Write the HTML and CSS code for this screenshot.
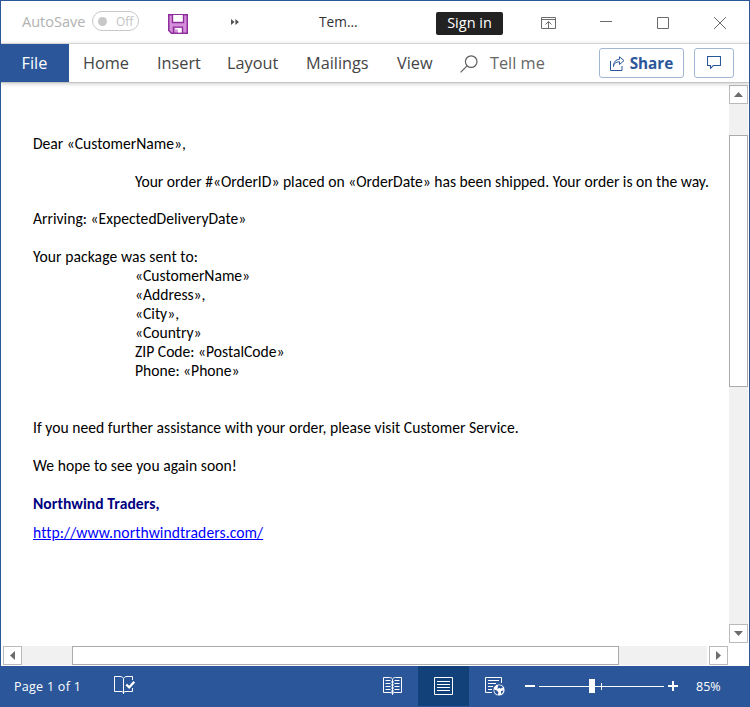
FILE: index.html
```
<!DOCTYPE html>
<html lang="en">
<head>
<meta charset="utf-8">
<title>Template - Word</title>
<link rel="stylesheet" href="styles.css">
</head>
<body>
<div class="window">
  <header class="titlebar">
    <span class="autosave">AutoSave</span>
    <span class="toggle"><i class="knob"></i><span>Off</span></span>
    <svg class="save" width="20" height="20" viewBox="0 0 20 20">
      <path d="M.75.75h18.5v18.5H3.5L.75 16.5z" fill="#d58fdb" stroke="#8f2f9c" stroke-width="1.5"/>
      <path d="M4.5 1v7.500h11V1" fill="#fff" stroke="#8f2f9c" stroke-width="1.4"/>
      <path d="M5.500 19.300v-6.200h9v6.200z" fill="#d58fdb" stroke="#8f2f9c" stroke-width="1.4"/>
      <path d="M7.200 14h6.400v4.600H9.800v-3H7.200z" fill="#fff"/>
    </svg>
    <svg class="more" width="8" height="6" viewBox="0 0 8 6" fill="#555"><path d="M0 0l3.600 3L0 6zM4.400 0L8 3 4.400 6z"/></svg>
    <span class="doc-name">Tem...</span>
    <span class="sign-in">Sign in</span>
    <svg class="ribbon-toggle" width="15" height="12" viewBox="0 0 15 12" fill="none" stroke="#6b6b6b"><path d="M.5.5h14v11H.5zM.5 2.500h14M7.500 11V4.500M4.500 7.500l3-3 3 3"/></svg>
    <svg class="minimize" width="12" height="12" viewBox="0 0 12 12" stroke="#6b6b6b"><path d="M0 5.500h12"/></svg>
    <svg class="maximize" width="12" height="12" viewBox="0 0 12 12" fill="none" stroke="#6b6b6b"><path d="M.5.5h11v11H.5z"/></svg>
    <svg class="close" width="12" height="12" viewBox="0 0 12 12" stroke="#6b6b6b"><path d="M0 0l12 12M12 0L0 12"/></svg>
  </header>

  <nav class="ribbon">
    <span class="tab file">File</span>
    <span class="tab home">Home</span>
    <span class="tab insert">Insert</span>
    <span class="tab layout">Layout</span>
    <span class="tab mailings">Mailings</span>
    <span class="tab view">View</span>
    <svg class="search" width="18" height="18" viewBox="0 0 18 18" fill="none" stroke="#5f5f5f" stroke-width="1.200"><circle cx="11.200" cy="6.600" r="5.800"/><path d="M7 10.800L.6 17.400"/></svg>
    <span class="tell">Tell me</span>
    <span class="button share">
      <svg width="15" height="15" viewBox="0 0 15 15" fill="none" stroke="#2b579a"><path d="M.5 5v9.500h11.500V10M3.500 10.500c.3-3 2-4.500 6-4.700M9.500 3.300c-3.600.2-6 2.600-6 7.200M9.500.8v2.500M9.500 5.800v2.700L14 4.600 9.500.8"/></svg>
      Share
    </span>
    <span class="button comment">
      <svg width="14" height="13" viewBox="0 0 14 13" fill="none" stroke="#2b579a" stroke-width="1.100"><path d="M.5.5h13v9H6.300L3.500 12.300V9.500h-3z"/></svg>
    </span>
  </nav>

  <main class="workspace">
    <article class="page">
      <p>Dear «CustomerName»,</p>
      <p class="indent gap">Your order #«OrderID» placed on «OrderDate» has been shipped. Your order is on the way.</p>
      <p class="arriving">Arriving: «ExpectedDeliveryDate»</p>
      <p class="gap sent">Your package was sent to:</p>
      <p class="indent">«CustomerName»</p>
      <p class="indent">«Address»,</p>
      <p class="indent">«City»,</p>
      <p class="indent">«Country»</p>
      <p class="indent">ZIP Code: «PostalCode»</p>
      <p class="indent">Phone: «Phone»</p>
      <p class="assist">If you need further assistance with your order, please visit Customer Service.</p>
      <p class="gap hope">We hope to see you again soon!</p>
      <p class="gap company">Northwind Traders,</p>
      <p class="site"><a href="#">http://www.northwindtraders.com/</a></p>
    </article>
    <div class="vscroll">
      <span class="arrow"><svg width="9" height="5" viewBox="0 0 9 5"><path d="M4.500 0L9 5H0z"/></svg></span>
      <div class="vtrack"><div class="vthumb"></div></div>
      <span class="arrow"><svg width="9" height="5" viewBox="0 0 9 5"><path d="M0 0h9L4.500 5z"/></svg></span>
    </div>
    <div class="hscroll">
      <span class="arrow"><svg width="5" height="9" viewBox="0 0 5 9"><path d="M5 0v9L0 4.500z"/></svg></span>
      <div class="htrack"><div class="hthumb"></div></div>
      <span class="arrow"><svg width="5" height="9" viewBox="0 0 5 9"><path d="M0 0l5 4.500L0 9z"/></svg></span>
    </div>
  </main>

  <footer class="status">
    <span class="pages">Page 1 of 1</span>
    <svg class="proof" width="21" height="19" viewBox="0 0 21 19" fill="none" stroke="#fff"><path d="M9.500 2.500C8.500 1 7.500.5 6 .5H.5v15H7c1.500 0 2.500.5 2.500 2 0-1.500 1-2 2.500-2h6.500V12M9.500 2.500v15M9.500 2.500c1-1.500 2-2 3.500-2h5.500V4"/><path d="M12.300 8.500l2.900 2.900 5-5.600" stroke-width="2.300"/></svg>
    <span class="mode read"><svg width="19" height="18" viewBox="0 0 19 18" fill="none" stroke="#fff"><path d="M9.500 2.500C9 1 8 .5 6.500.5h-6v15h6.500c1.500 0 2.500.5 2.500 2 0-1.500 1-2 2.500-2h6.500V.5h-6c-1.500 0-2.500.5-3 2v15M2.500 3.500h5M2.500 6.500h5M2.500 9.500h5M2.500 12.500h5M11.500 3.500h5M11.500 6.500h5M11.500 9.500h5M11.500 12.500h5M8 5h3M8 8h3M8 11h3M8 14h3"/></svg></span>
    <span class="mode print"><svg width="19" height="18" viewBox="0 0 19 18" fill="none" stroke="#fff"><path d="M.5.5h18v17H.5zM3 4.500h13M3 7.500h13M3 10.500h13M3 13.500h13"/></svg></span>
    <span class="mode web"><svg width="20" height="19" viewBox="0 0 20 19" fill="none" stroke="#fff"><path d="M7 15.500H.5V.5h16V6M3 3.500h11M3 6.500h8M3 9.500h5M3 12.500h4"/><circle cx="14" cy="13" r="6" fill="#fff" stroke="#2b579a" stroke-width=".8"/><path d="M13 8.500c2-.6 4 .2 5 2l-2.200 1-1.800-.5-1.500 1zM9 12.500l3 1 1.500 2-.8 2.200c-2-.6-3.400-2.400-3.700-5.200zM16 14l2.500-.5c-.3 1.500-1.200 2.800-2.500 3.500z" fill="#2b579a" stroke="none"/></svg></span>
    <div class="zoom">
      <i class="minus"></i>
      <div class="slider"><i class="rail"></i><i class="handle"></i><i class="rail mid"></i><i class="tick"></i><i class="rail rest"></i></div>
      <svg width="10" height="10" viewBox="0 0 10 10" stroke="#fff" stroke-width="2"><path d="M0 5h10M5 0v10"/></svg>
      <span class="percent">85%</span>
    </div>
  </footer>
</div>
</body>
</html>
```
FILE: styles.css
```
* { box-sizing: border-box; }

body {
  margin: 0;
  font-family: "Open Sans", "Noto Sans", sans-serif;
  color: #444;
}

svg { display: block; flex: none; }

.window {
  display: grid;
  grid-template-rows: 42px 40px 1fr 41px;
  width: 750px;
  height: 707px;
  border: 1px solid #2b579a;
  border-bottom: 0;
  background: #fff;
  overflow: hidden;
  white-space: nowrap;
}

/* Title bar */
.titlebar { display: flex; align-items: center; padding-left: 21px; }
.autosave { width: 70px; margin-top: -2px; font-size: 14.5px; color: #b1b1b1; }
.toggle {
  display: flex;
  align-items: center;
  width: 47px;
  height: 20px;
  margin-top: -2px;
  padding-left: 5px;
  border: 1px solid #c8c8c8;
  border-radius: 10px;
  color: #c3c3c3;
  font-size: 12px;
}
.knob { width: 9px; height: 9px; margin-right: 9px; border-radius: 50%; background: #c8c8c8; }
.save { margin: 4px 0 0 29px; }
.more { margin-left: 43px; }
.doc-name { width: 39px; margin: -2px 0 0 80px; font-size: 13.7px; color: #333; }
.sign-in {
  width: 67px;
  height: 23px;
  margin: 2px 0 0 78px;
  border-radius: 2px;
  background: #222;
  color: #fff;
  font-size: 14.5px;
  line-height: 21px;
  text-align: center;
}
.ribbon-toggle { margin: 1px 0 0 38px; }
.minimize { margin-left: 44px; }
.maximize { margin: 1px 0 0 45px; }
.close { margin: 1px 0 0 45px; }

/* Ribbon tabs */
.ribbon {
  display: flex;
  align-items: center;
  border-top: 1px solid #d5d5d5;
  border-bottom: 1px solid #c6c6c6;
  box-shadow: 0 1px 4px rgba(0, 0, 0, .2);
  font-size: 16.3px;
  z-index: 1;
}
.tab { line-height: 38px; }
.file { width: 68px; background: #2b579a; color: #fff; text-align: center; padding-right: 1px; }
.home { width: 74px; margin-left: 14px; }
.insert { width: 70px; }
.layout { width: 79px; }
.mailings { width: 91px; }
.view { width: 63px; }
.search { margin-top: 1px; }
.tell { width: 109px; margin-left: 12px; color: #666; }
.button {
  display: flex;
  align-items: center;
  justify-content: center;
  height: 30px;
  border: 1px solid #a3b7d4;
  border-radius: 3px;
  color: #2b579a;
}
.share { width: 85px; gap: 5px; font-size: 15.3px; font-weight: 700; }
.comment { width: 40px; margin-left: 10px; padding-bottom: 1px; }

/* Document */
.workspace {
  display: grid;
  grid-template: 561px 20px / 728px 19px;
  align-content: start;
}
.page {
  padding: 51px 0 0 32px;
  font: 15.6px/19px Carlito, Calibri, Lato, sans-serif;
  color: #000;
}
.page p { margin: 0; }
.page .indent { padding-left: 102px; }
.page .gap { margin-top: 19px; }
.page .arriving { margin-top: 18px; letter-spacing: .02px; }
.page .sent { letter-spacing: .08px; }
.page .assist { margin-top: 38px; letter-spacing: .03px; }
.page .hope { letter-spacing: .05px; }
.page .company { color: #000080; font-weight: 700; letter-spacing: .08px; }
.page .site { margin-top: 10px; letter-spacing: .08px; }
.page a { color: #00f; }

.arrow {
  display: grid;
  place-items: center;
  flex: none;
  width: 19px;
  height: 19px;
  border: 1px solid #bababa;
  background: #fff;
  fill: #6d6d6d;
}
.vscroll { display: flex; flex-direction: column; padding-top: 2px; height: 560px; }
.vtrack { flex: 1; padding-top: 31px; background: #f1f1f1; }
.vthumb { height: 252px; border: 1px solid #ababab; background: #fff; }
.hscroll { display: flex; padding: 2px 1px 0 2px; }
.htrack { width: 685px; height: 19px; margin-right: 2px; padding-left: 50px; background: #f1f1f1; }
.hthumb { width: 547px; height: 19px; border: 1px solid #ababab; background: #fff; }

/* Status bar */
.status {
  display: flex;
  align-items: center;
  margin: 0 -1px;
  padding-left: 14px;
  background: #2b579a;
  color: #fff;
  font-size: 12.5px;
}
.pages { width: 100px; letter-spacing: .28px; }
.proof { margin-top: -2px; }
.mode { display: grid; place-items: center; width: 51px; height: 40px; margin-bottom: 1px; }
.read { margin-left: 232px; }
.print { background: #124078; }
.zoom { display: flex; align-items: center; margin: -1px 0 0 5px; }
.minus { width: 10px; height: 2px; background: #fff; }
.slider { display: flex; align-items: center; width: 125px; margin: 0 4px; }
.rail { width: 50px; height: 1px; background: #fff; }
.handle { width: 6px; height: 14px; background: #fff; }
.mid { width: 6px; }
.tick { width: 1px; height: 7px; background: #fff; }
.rest { width: 62px; }
.percent { margin-left: 18px; }
```
